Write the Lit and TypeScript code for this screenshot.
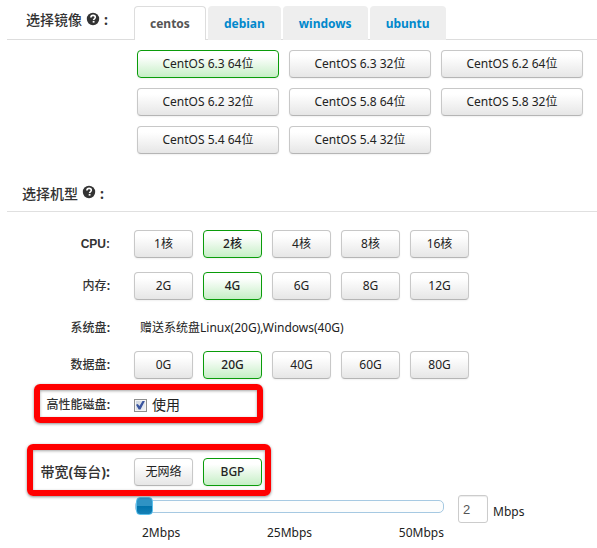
import { LitElement, html, css, svg } from "lit";
import { customElement, property, state } from "lit/decorators.js";
import { classMap } from "lit/directives/class-map.js";

const helpIcon = html`<svg class="help" viewBox="0 0 14 14" width="14" height="14" role="img" aria-label="帮助">
  ${svg`<circle cx="7" cy="7" r="6.2" fill="#333"/>
  <path d="M4.9 5.6C4.9 4.2 5.8 3.4 7.1 3.4s2.2.8 2.2 1.9c0 1.4-1.7 1.5-1.7 2.7" fill="none" stroke="#fff" stroke-width="1.6"/>
  <rect x="6.7" y="8.9" width="1.8" height="1.7" fill="#fff"/>`}
</svg>`;

@customElement("option-group")
class OptionGroup extends LitElement {
  @property({ type: Array }) options: string[] = [];
  @property() selected = "";
  @property({ type: Boolean, reflect: true }) wide = false;

  static styles = css`
    :host {
      display: flex;
      flex-wrap: wrap;
      gap: 10px;
    }
    .option {
      box-sizing: border-box;
      width: 59px;
      height: 28px;
      padding: 0;
      border: 1px solid #c8c8c8;
      border-bottom-color: #b5b5b5;
      border-radius: 4px;
      background: linear-gradient(#fff 20%, #e6e6e6);
      box-shadow: 0 1px 2px rgba(0, 0, 0, 0.06);
      color: #222;
      font: inherit;
      line-height: 26px;
      white-space: nowrap;
    }
    :host([wide]) .option {
      width: 142px;
    }
    .option.selected {
      border-color: #0a9c0a;
      background: linear-gradient(#fff 20%, #c6efc6);
    }
    :host(:not([wide])) .selected {
      font-weight: 500;
    }
  `;

  render() {
    return this.options.map(
      (o) => html`<button
        type="button"
        class=${classMap({ option: true, selected: o === this.selected })}
        aria-pressed=${o === this.selected ? "true" : "false"}
        @click=${() => (this.selected = o)}
      >${o}</button>`
    );
  }
}

@customElement("app-root")
class AppRoot extends LitElement {
  @state() private tab = "centos";
  @state() private bandwidth = 2;

  static styles = css`
    :host {
      display: block;
      padding: 6px 0 0 7px;
      background: #fff;
      color: #222;
      font: 12px/18px "Noto Sans", "Noto Sans CJK SC", sans-serif;
    }
    .head {
      display: flex;
      border-bottom: 1px solid #ddd;
    }
    .title {
      box-sizing: border-box;
      display: flex;
      align-items: center;
      gap: 4px;
      margin: 0;
      color: #333;
      font-size: 14px;
      line-height: 28px;
      font-weight: 500;
    }
    .help {
      margin-bottom: 3px;
    }
    .colon {
      font-weight: 700;
    }
    .head .title {
      flex: none;
      width: 127px;
      height: 28px;
      padding-left: 19px;
    }
    .tabs {
      display: flex;
      gap: 2px;
      margin-bottom: -1px;
    }
    .tab {
      box-sizing: border-box;
      height: 34px;
      padding: 0 15px;
      border: 1px solid #eee;
      border-bottom: 0;
      border-radius: 4px 4px 0 0;
      background: #eee;
      color: #08c;
      font: inherit;
      font-weight: 700;
    }
    .tab.active {
      border-color: #ddd;
      background: #fff;
      color: #555;
    }
    .images {
      padding: 10px 0 0 130px;
    }
    .model {
      height: 36px;
      margin-top: 22px;
      padding: 0 0 0 15px;
      border-bottom: 1px solid #e0e0e0;
    }
    .row {
      position: relative;
      display: grid;
      grid-template-columns: 103px 1fr;
      column-gap: 24px;
      align-items: center;
      min-height: 28px;
      margin-bottom: 14px;
    }
    .rows {
      padding-top: 18px;
    }
    .name {
      font-weight: 500;
      text-align: right;
      color: #333;
    }
    .name.latin {
      font-family: "Liberation Sans", Arial, sans-serif;
      font-weight: 700;
    }
    .name.large {
      font-size: 14px;
    }
    .row.note {
      margin-bottom: 9px;
    }
    .note .text {
      padding-left: 6px;
    }
    .row.check {
      margin-bottom: 39px;
      margin-top: -2px;
    }
    .row.net {
      margin-bottom: 0;
    }
    .mark::after {
      content: "";
      position: absolute;
      box-sizing: border-box;
      border: 6px solid #f00;
      border-radius: 6px;
      box-shadow: 0 1px 3px rgba(0, 0, 0, 0.45), inset 0 1px 3px rgba(0, 0, 0, 0.35);
      pointer-events: none;
    }
    .check::after {
      left: 27px;
      top: -7px;
      width: 229px;
      height: 39px;
    }
    .net::after {
      left: 20px;
      top: -14px;
      width: 244px;
      height: 52px;
    }
    .use {
      display: flex;
      align-items: center;
      gap: 5px;
      font-size: 14px;
    }
    .box {
      appearance: none;
      box-sizing: border-box;
      width: 13px;
      height: 13px;
      margin: 0;
      border: 1px solid #8e8f8f;
      outline: 1px solid #f4f4f4;
      outline-offset: -2px;
      background: linear-gradient(135deg, #cbd2dc, #f4f6f8);
      display: grid;
      place-items: center;
    }
    .box:checked::before {
      content: "";
      width: 9px;
      height: 9px;
      background: #3a559f;
      clip-path: polygon(0 48%, 20% 38%, 38% 62%, 76% 0, 100% 4%, 50% 100%, 30% 100%);
    }
    .speed {
      display: flex;
      align-items: flex-start;
      padding: 9px 0 0 128px;
    }
    .scale {
      width: 309px;
    }
    .slider {
      appearance: none;
      display: block;
      width: 100%;
      height: 18px;
      margin: 2px 0 0;
      background: none;
    }
    .slider::-webkit-slider-runnable-track {
      box-sizing: border-box;
      height: 13px;
      border: 1px solid #a6c9e2;
      border-radius: 5px;
      background: #fcfdfd;
    }
    .slider::-webkit-slider-thumb {
      appearance: none;
      box-sizing: border-box;
      width: 17px;
      height: 18px;
      margin-top: -4px;
      border: 1px solid #5cc0ec;
      border-radius: 4px;
      background: linear-gradient(#2f93c4 50%, #0073ab 50%, #1580b6);
    }
    .marks {
      display: flex;
      justify-content: space-between;
      padding: 9px 0 0 7px;
    }
    .amount {
      box-sizing: border-box;
      width: 30px;
      height: 28px;
      margin-left: 14px;
      padding: 0 4px;
      border: 1px solid #ccc;
      border-radius: 3px;
      background: #fff;
      box-shadow: inset 0 1px 1px rgba(0, 0, 0, 0.075);
      color: #555;
      font: inherit;
      font-family: "Liberation Sans", Arial, sans-serif;
      font-size: 13px;
    }
    .unit {
      margin: 8px 0 0 5px;
    }
  `;

  private setBandwidth(e: Event) {
    this.bandwidth = Number((e.target as HTMLInputElement).value);
  }

  private row(name: string, options: string[], selected: string, cls = "") {
    return html`<div class="row">
      <span class="name ${cls}">${name}<span class="colon">:</span></span>
      <option-group role="group" aria-label=${name} .options=${options} .selected=${selected}></option-group>
    </div>`;
  }

  render() {
    return html`
      <div class="head">
        <h2 class="title">选择镜像 ${helpIcon} <span class="colon">:</span></h2>
        <div class="tabs" role="tablist">
          ${["centos", "debian", "windows", "ubuntu"].map(
            (t) => html`<button
              type="button"
              role="tab"
              aria-selected=${t === this.tab ? "true" : "false"}
              class=${classMap({ tab: true, active: t === this.tab })}
              @click=${() => (this.tab = t)}
            >${t}</button>`
          )}
        </div>
      </div>
      <div class="images">
        <option-group
          wide
          .options=${[
            "CentOS 6.3 64位", "CentOS 6.3 32位", "CentOS 6.2 64位", "CentOS 6.2 32位",
            "CentOS 5.8 64位", "CentOS 5.8 32位", "CentOS 5.4 64位", "CentOS 5.4 32位",
          ]}
          .selected=${"CentOS 6.3 64位"}
        ></option-group>
      </div>

      <h2 class="title model">选择机型 ${helpIcon} <span class="colon">:</span></h2>
      <div class="rows">
        ${this.row("CPU", ["1核", "2核", "4核", "8核", "16核"], "2核", "latin")}
        ${this.row("内存", ["2G", "4G", "6G", "8G", "12G"], "4G")}
        <div class="row note">
          <span class="name">系统盘<span class="colon">:</span></span>
          <span class="text">赠送系统盘Linux(20G),Windows(40G)</span>
        </div>
        ${this.row("数据盘", ["0G", "20G", "40G", "60G", "80G"], "20G")}
        <div class="row check mark">
          <span class="name">高性能磁盘<span class="colon">:</span></span>
          <label class="use"><input class="box" type="checkbox" checked />使用</label>
        </div>
        <div class="row net mark">
          <span class="name large">带宽<span class="colon">(</span>每台<span class="colon">):</span></span>
          <option-group role="group" aria-label="带宽" .options=${["无网络", "BGP"]} .selected=${"BGP"}></option-group>
        </div>
      </div>
      <div class="speed">
        <div class="scale">
          <input class="slider" type="range" min="2" max="50" aria-label="带宽"
            .value=${String(this.bandwidth)} @input=${this.setBandwidth} />
          <div class="marks"><span>2Mbps</span><span>25Mbps</span><span>50Mbps</span></div>
        </div>
        <input class="amount" id="amount" type="text" .value=${String(this.bandwidth)} @change=${this.setBandwidth} />
        <label class="unit" for="amount">Mbps</label>
      </div>
    `;
  }
}
